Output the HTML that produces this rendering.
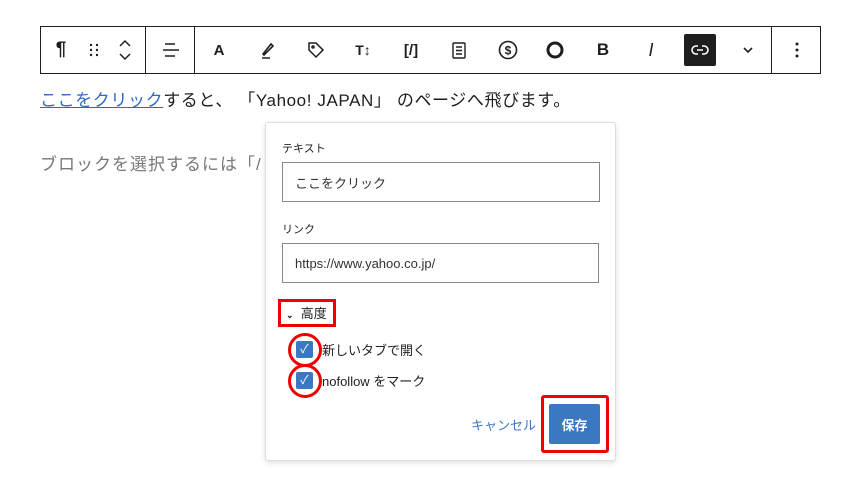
<!DOCTYPE html>
<html><head><meta charset="utf-8"><style>
*{box-sizing:border-box;margin:0;padding:0}
body{width:856px;height:487px;background:#fff;position:relative;overflow:hidden;font-family:"Liberation Sans","Noto Sans CJK JP",sans-serif;color:#1e1e1e}
.abs{position:absolute}
.tb{left:40px;top:26px;width:781px;height:48px;border:1px solid #1e1e1e;background:#fff}
.dv{top:0;width:1px;height:46px;background:#1e1e1e}
.ic{top:0;height:46px;width:30px;display:flex;align-items:center;justify-content:center;font-size:17px;font-weight:bold;margin-left:-15px}
.pop{left:265px;top:122px;width:351px;height:339px;border:1px solid #ddd;border-radius:3px;background:#fff;box-shadow:0 2px 6px rgba(0,0,0,.12)}
.lbl{font-size:11px;color:#1e1e1e}
.inp{border:1px solid #888;font-size:13px;padding-left:12px;display:flex;align-items:center;color:#333}
.cb{width:17px;height:17px;background:#3b78c2;border-radius:2px;color:#fff;font-size:12px;text-align:center;line-height:17px}
.red{border:3px solid #e00;}
</style></head><body>
<div class="abs tb">
 <div class="abs ic" style="left:20px;font-size:19px">¶</div>
 <div class="abs ic" style="left:53px"><svg width="10" height="14"><g fill="#1e1e1e"><circle cx="2" cy="2" r="1.2"/><circle cx="8" cy="2" r="1.2"/><circle cx="2" cy="7" r="1.2"/><circle cx="8" cy="7" r="1.2"/><circle cx="2" cy="12" r="1.2"/><circle cx="8" cy="12" r="1.2"/></g></svg></div>
 <div class="abs ic" style="left:84px"><svg width="14" height="24" fill="none" stroke="#1e1e1e" stroke-width="1.5"><path d="M2 8l5-5 5 5M2 16l5 5 5-5"/></svg></div>
 <div class="abs dv" style="left:104px"></div>
 <div class="abs ic" style="left:130px"><svg width="18" height="16" stroke="#1e1e1e" stroke-width="1.5"><path d="M3 2h10M1 8h16M3 14h10"/></svg></div>
 <div class="abs dv" style="left:153px"></div>
 <div class="abs ic" style="left:178px;font-size:15px">A</div>
 <div class="abs ic" style="left:227px"><svg width="18" height="18" fill="none" stroke="#1e1e1e" stroke-width="1.6"><path d="M4 13l8-10 2 2-9 9zM3 17h8"/></svg></div>
 <div class="abs ic" style="left:275px"><svg width="18" height="18" fill="none" stroke="#1e1e1e" stroke-width="1.5"><path d="M2 2h7l7 7-7 7-7-7z"/><circle cx="6" cy="6" r="1"/></svg></div>
 <div class="abs ic" style="left:322px;font-size:14px">T↕</div>
 <div class="abs ic" style="left:370px;font-size:15px">[/]</div>
 <div class="abs ic" style="left:418px"><svg width="14" height="17" fill="none" stroke="#1e1e1e" stroke-width="1.4"><rect x="1" y="1" width="12" height="15" rx="1"/><path d="M4 5h6M4 8.5h6M4 12h6"/></svg></div>
 <div class="abs ic" style="left:467px"><svg width="20" height="20" fill="none" stroke="#1e1e1e" stroke-width="1.6"><circle cx="10" cy="10" r="8.5"/><text x="10" y="14.5" font-size="12" text-anchor="middle" fill="#1e1e1e" stroke="none" font-family="Liberation Sans">$</text></svg></div>
 <div class="abs ic" style="left:514px"><svg width="20" height="20" fill="none" stroke="#1e1e1e" stroke-width="3"><circle cx="10" cy="10" r="7"/></svg></div>
 <div class="abs ic" style="left:562px">B</div>
 <div class="abs ic" style="left:610px;font-style:italic;font-weight:normal;font-size:18px">I</div>
 <div class="abs" style="left:643px;top:7px;width:32px;height:32px;background:#1e1e1e;border-radius:2px;display:flex;align-items:center;justify-content:center"><svg width="18" height="12" fill="none" stroke="#fff" stroke-width="1.6"><path d="M7 2H5a4 4 0 000 8h2M11 2h2a4 4 0 010 8h-2M6 6h6"/></svg></div>
 <div class="abs ic" style="left:707px"><svg width="12" height="8" fill="none" stroke="#1e1e1e" stroke-width="1.6"><path d="M2 2l4 4 4-4"/></svg></div>
 <div class="abs dv" style="left:730px"></div>
 <div class="abs ic" style="left:756px"><svg width="4" height="16" fill="#1e1e1e"><circle cx="2" cy="2" r="1.5"/><circle cx="2" cy="8" r="1.5"/><circle cx="2" cy="14" r="1.5"/></svg></div>
</div>
<div class="abs" style="left:40px;top:86px;font-size:17px;letter-spacing:0.6px;white-space:nowrap;color:#1e1e1e"><span style="color:#2e6bc0;text-decoration:underline">ここをクリック</span>すると、 「Yahoo! JAPAN」 のページへ飛びます。</div>
<div class="abs" style="left:40px;top:150px;font-size:17px;letter-spacing:1px;white-space:nowrap;color:#777">ブロックを選択するには「/</div>
<div class="abs pop">
 <div class="abs lbl" style="left:16px;top:17px">テキスト</div>
 <div class="abs inp" style="left:16px;top:39px;width:318px;height:40px">ここをクリック</div>
 <div class="abs lbl" style="left:16px;top:98px">リンク</div>
 <div class="abs inp" style="left:16px;top:120px;width:317px;height:40px">https://www.yahoo.co.jp/</div>
 <div class="abs red" style="left:12px;top:176px;width:58px;height:28px"></div>
 <div class="abs" style="left:20px;top:180px;font-size:13px"><span style="font-size:9px;font-weight:bold">⌄</span>&nbsp; 高度</div>
 <div class="abs" style="left:22px;top:210px;width:34px;height:34px;border:3px solid #e00;border-radius:50%"></div>
 <div class="abs cb" style="left:30px;top:218px">✓</div>
 <div class="abs" style="left:56px;top:217px;font-size:13px">新しいタブで開く</div>
 <div class="abs" style="left:22px;top:241px;width:34px;height:34px;border:3px solid #e00;border-radius:50%"></div>
 <div class="abs cb" style="left:30px;top:249px">✓</div>
 <div class="abs" style="left:56px;top:248px;font-size:13px">nofollow をマーク</div>
 <div class="abs" style="left:205px;top:292px;font-size:13px;color:#3b78c2">キャンセル</div>
 <div class="abs red" style="left:275px;top:272px;width:68px;height:58px;border-radius:3px"></div>
 <div class="abs" style="left:283px;top:281px;width:51px;height:40px;background:#3b78c2;border-radius:2px;color:#fff;font-size:13px;font-weight:bold;display:flex;align-items:center;justify-content:center">保存</div>
</div>
</body></html>
